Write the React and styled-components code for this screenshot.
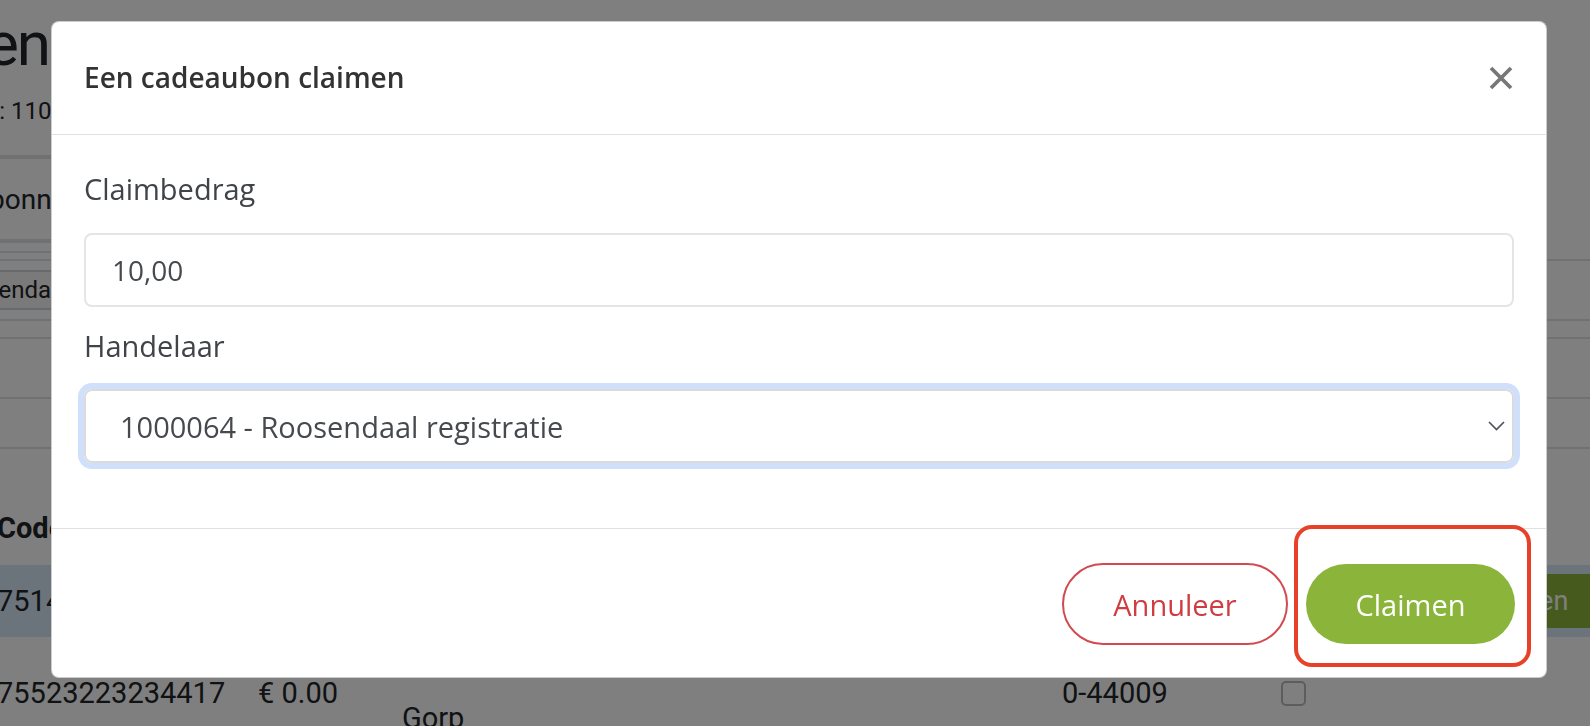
import styled, { createGlobalStyle } from "styled-components";

const GlobalStyle = createGlobalStyle`
  * { box-sizing: border-box; }
  html, body { margin: 0; padding: 0; }
  body {
    background: #fff;
    font-family: "Open Sans", "Noto Sans", sans-serif;
    overflow: hidden;
  }
`;

const Screen = styled.div`
  position: relative;
  width: 1590px;
  height: 726px;
  overflow: hidden;
  background: #fff;
`;

/* page behind the modal, scrolled to the right */
const Sheet = styled.div`
  margin-left: -300px;
  width: 2200px;
  font-family: Roboto, "Open Sans", sans-serif;
  color: #212529;
`;

const Header = styled.header`
  width: 349px;
  display: flex;
  flex-direction: column;
  align-items: flex-end;
  white-space: nowrap;
`;

const PageTitle = styled.h1`
  margin: 0;
  padding-top: 8px;
  font-size: 62px;
  line-height: 72px;
  font-weight: 400;
  letter-spacing: -2px;
`;

const PageSub = styled.p`
  margin: 16px -16px 0 0;
  font-size: 24px;
  line-height: 30px;
`;

const TabBar = styled.nav`
  margin-top: 29px;
  width: 700px;
  height: 88px;
  border-top: 4px solid #dee2e6;
  border-bottom: 4px solid #dee2e6;
  display: flex;
  align-items: center;
`;

const Tab = styled.span`
  width: 382px;
  display: flex;
  justify-content: flex-end;
  font-size: 28px;
  white-space: nowrap;
`;

const Rule = styled.div`
  height: ${(p) => p.$h}px;
  border-bottom: 2px solid #dee2e6;
  width: ${(p) => (p.$full ? "100%" : "700px")};
`;

const FilterRow = styled.div`
  height: ${(p) => p.$h}px;
  border-bottom: 2px solid #dee2e6;
  display: flex;
  align-items: center;
`;

const FilterSelect = styled.div`
  width: 420px;
  height: 40px;
  border-top: 2px solid #ced4da;
  border-bottom: 2px solid #ced4da;
  background: #f4f4f4;
  display: flex;
  align-items: center;
  font-size: 24px;
  white-space: nowrap;
  padding-left: 244px;
`;

const Table = styled.div`
  margin-left: 297px;
  width: 1600px;
`;

const TRow = styled.div`
  display: grid;
  grid-template-columns: 261px 144px 660px 219px 165px 360px;
  align-items: ${(p) => (p.$head ? "end" : "center")};
  min-height: ${(p) => p.$h}px;
  padding: ${(p) => (p.$head ? "0 0 22px" : "6px 0")};
  background: ${(p) => (p.$active ? "#d6e6f6" : "transparent")};
  font-size: 29px;
  font-weight: ${(p) => (p.$head ? 700 : 400)};
  line-height: 1;
`;

const Wrap = styled.div`
  max-width: 430px;
  line-height: 50px;
`;

const Check = styled.span`
  display: block;
  width: 25px;
  height: 25px;
  border: 2px solid #bbb;
  border-radius: 5px;
  background: #fff;
`;

const RowButton = styled.span`
  justify-self: start;
  display: inline-flex;
  align-items: center;
  height: 54px;
  padding: 0 26px 0 24px;
  background: #8cb43c;
  color: #fff;
  font-size: 27px;
`;

/* modal */
const Overlay = styled.div`
  position: fixed;
  inset: 0;
  background: rgba(0, 0, 0, 0.5);
  display: flex;
  align-items: flex-start;
  padding: 21px 0 0 51px;
`;

const Dialog = styled.div`
  width: 1496px;
  background: #fff;
  border: 1px solid rgba(0, 0, 0, 0.2);
  border-radius: 8px;
  display: flex;
  flex-direction: column;
`;

const ModalHeader = styled.div`
  height: 113px;
  padding: 0 32px 3px;
  display: flex;
  align-items: center;
  justify-content: space-between;
  border-bottom: 1px solid #dee2e6;
`;

const ModalTitle = styled.h5`
  margin: 0;
  font-size: 28px;
  font-weight: 600;
  color: #333;
`;

const CloseButton = styled.button`
  border: 0;
  background: none;
  padding: 0;
  width: 24px;
  height: 24px;
  margin: 3px 1px 0 0;
  display: flex;
`;

const ModalBody = styled.div`
  padding: 33px 32px 65px;
  display: flex;
  flex-direction: column;
`;

const Label = styled.label`
  font-size: 29px;
  line-height: 42px;
  color: #404448;
  margin: ${(p) => (p.$first ? "0" : "18px")} 0 ${(p) => (p.$first ? 23 : 22)}px;
`;

const Field = styled.div`
  height: 74px;
  border: 2px solid ${(p) => (p.$focus ? "#d9dbdd" : "#e3e5e7")};
  border-radius: 8px;
  display: flex;
  align-items: center;
  justify-content: space-between;
  padding: 0 7px 0 ${(p) => (p.$focus ? 34 : 26)}px;
  font-size: ${(p) => (p.$focus ? 29 : 28)}px;
  color: #464a4e;
  box-shadow: ${(p) => (p.$focus ? "0 0 0 6px #d0e0fb" : "none")};
`;

const ModalFooter = styled.div`
  border-top: 1px solid #dee2e6;
  padding: 34px 31px 32px;
  display: flex;
  justify-content: flex-end;
  align-items: center;
  gap: 18px;
`;

const Button = styled.button`
  position: relative;
  font-family: "Open Sans", sans-serif;
  font-size: 29px;
  border-radius: 41px;
  cursor: pointer;
  height: ${(p) => (p.$primary ? 80 : 82)}px;
  width: ${(p) => (p.$primary ? 209 : 226)}px;
  border: ${(p) => (p.$primary ? "0" : "2px solid #d24a4f")};
  background: ${(p) => (p.$primary ? "#8ab53a" : "#fff")};
  color: ${(p) => (p.$primary ? "#fff" : "#cf3d42")};

  ${(p) =>
    p.$marked &&
    `
    &::after {
      content: "";
      position: absolute;
      top: -39px;
      right: -16px;
      bottom: -23px;
      left: -12px;
      border: 4px solid #e8412a;
      border-radius: 18px;
      pointer-events: none;
    }
  `}
`;

export default function App() {
  return (
    <Screen>
      <GlobalStyle />
      <Sheet>
        <Header>
          <PageTitle>Cadeaubonnen</PageTitle>
          <PageSub>Totaal: 1100</PageSub>
        </Header>
        <TabBar>
          <Tab>Cadeaubonnen</Tab>
        </TabBar>
        <Rule $h={10} />
        <Rule $h={8} $full />
        <FilterRow $h={60}>
          <FilterSelect>Roosendaal</FilterSelect>
        </FilterRow>
        <FilterRow $h={18} />
        <FilterRow $h={60} />
        <FilterRow $h={50} />
        <Table>
          <TRow $head $h={116}>
            <span>Code</span>
            <span />
            <span />
            <span />
            <span />
            <span />
          </TRow>
          <TRow $active $h={72}>
            <span>75141223234417</span>
            <span />
            <span />
            <span />
            <span />
            <RowButton>Claimen</RowButton>
          </TRow>
          <TRow $h={112}>
            <span>75523223234417</span>
            <span>€ 0.00</span>
            <Wrap>1000050 - Muziekcentrum van Gorp</Wrap>
            <span>0-44009</span>
            <Check />
            <span />
          </TRow>
        </Table>
      </Sheet>

      <Overlay>
        <Dialog>
          <ModalHeader>
            <ModalTitle>Een cadeaubon claimen</ModalTitle>
            <CloseButton aria-label="Sluiten">
              <svg width="24" height="24" viewBox="0 0 24 24">
                <path d="M2 2 L22 22 M22 2 L2 22" stroke="#777" strokeWidth="3.8" fill="none" />
              </svg>
            </CloseButton>
          </ModalHeader>
          <ModalBody>
            <Label $first>Claimbedrag</Label>
            <Field>10,00</Field>
            <Label>Handelaar</Label>
            <Field $focus>
              <span>1000064 - Roosendaal registratie</span>
              <svg width="17" height="10" viewBox="0 0 17 10">
                <polyline points="1,1 8.5,8.5 16,1" stroke="#505458" strokeWidth="1.7" fill="none" />
              </svg>
            </Field>
          </ModalBody>
          <ModalFooter>
            <Button>Annuleer</Button>
            <Button $primary $marked>
              Claimen
            </Button>
          </ModalFooter>
        </Dialog>
      </Overlay>
    </Screen>
  );
}
